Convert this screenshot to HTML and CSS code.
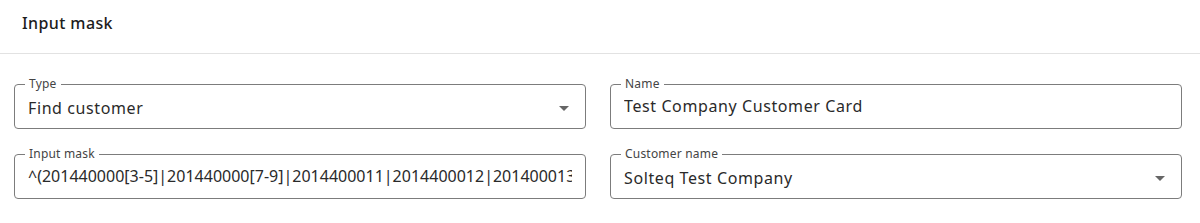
FILE: index.html
```html
<!DOCTYPE html>
<html>
<head>
    <link rel="stylesheet" href="styles.css">
</head>
<body>
    <div class="dialog-header">
        <h2 class="dialog-title">Input mask</h2>
    </div>

    <div class="form-grid">
        <fieldset class="outlined">
            <legend>Type</legend>
            <div class="select-row">
                <span class="value">Find customer</span>
                <svg class="arrow" viewBox="0 0 24 24" width="24" height="24"><path d="M7 10l5 5 5-5z"/></svg>
            </div>
        </fieldset>

        <fieldset class="outlined">
            <legend>Name</legend>
            <input class="value" type="text" value="Test Company Customer Card">
        </fieldset>

        <fieldset class="outlined">
            <legend>Input mask</legend>
            <input class="value mask" type="text" value="^(201440000[3-5]|201440000[7-9]|2014400011|2014400012|201400013|201400014|201400015)$">
        </fieldset>

        <fieldset class="outlined">
            <legend>Customer name</legend>
            <div class="select-row">
                <span class="value">Solteq Test Company</span>
                <svg class="arrow" viewBox="0 0 24 24" width="24" height="24"><path d="M7 10l5 5 5-5z"/></svg>
            </div>
        </fieldset>
    </div>
</body>
</html>
```

FILE: styles.css
```css
body {
    margin: 0;
    padding: 0;
    background-color: white;
    font-family: "Noto Sans", "Open Sans", sans-serif;
    color: #2a2a2a;
}

.dialog-header {
    height: 54px;
    box-sizing: border-box;
    border-bottom: 1px solid #e2e2e2;
    padding: 13px 0 0 22px;
}

.dialog-title {
    margin: 0;
    font-size: 16px;
    line-height: 20px;
    font-weight: 500;
    letter-spacing: 0.4px;
    color: #1d1d1d;
}

.form-grid {
    display: grid;
    grid-template-columns: 572px 572px;
    column-gap: 24px;
    row-gap: 19px;
    padding: 24px 18px 0 14px;
}

.outlined {
    margin: 0;
    border: 1px solid #7c7c7c;
    border-radius: 4px;
    padding: 0 13px 8px 13px;
    min-width: 0;
}

.outlined legend {
    font-size: 12px;
    line-height: 12px;
    letter-spacing: 0.2px;
    color: #444;
    padding: 0 4px;
    margin-left: -3px;
}

.value {
    display: block;
    font-family: inherit;
    font-size: 16px;
    line-height: 20px;
    letter-spacing: 0.6px;
    color: #2a2a2a;
    padding: 6px 0 0 0;
    margin: 0;
    border: none;
    outline: none;
    width: 100%;
    background: transparent;
}

.value.mask {
    letter-spacing: 0;
}

.select-row {
    display: flex;
    align-items: center;
}

.select-row .value {
    flex: 1;
}

.arrow {
    fill: #666;
    margin-top: 6px;
    margin-right: -4px;
}
```
